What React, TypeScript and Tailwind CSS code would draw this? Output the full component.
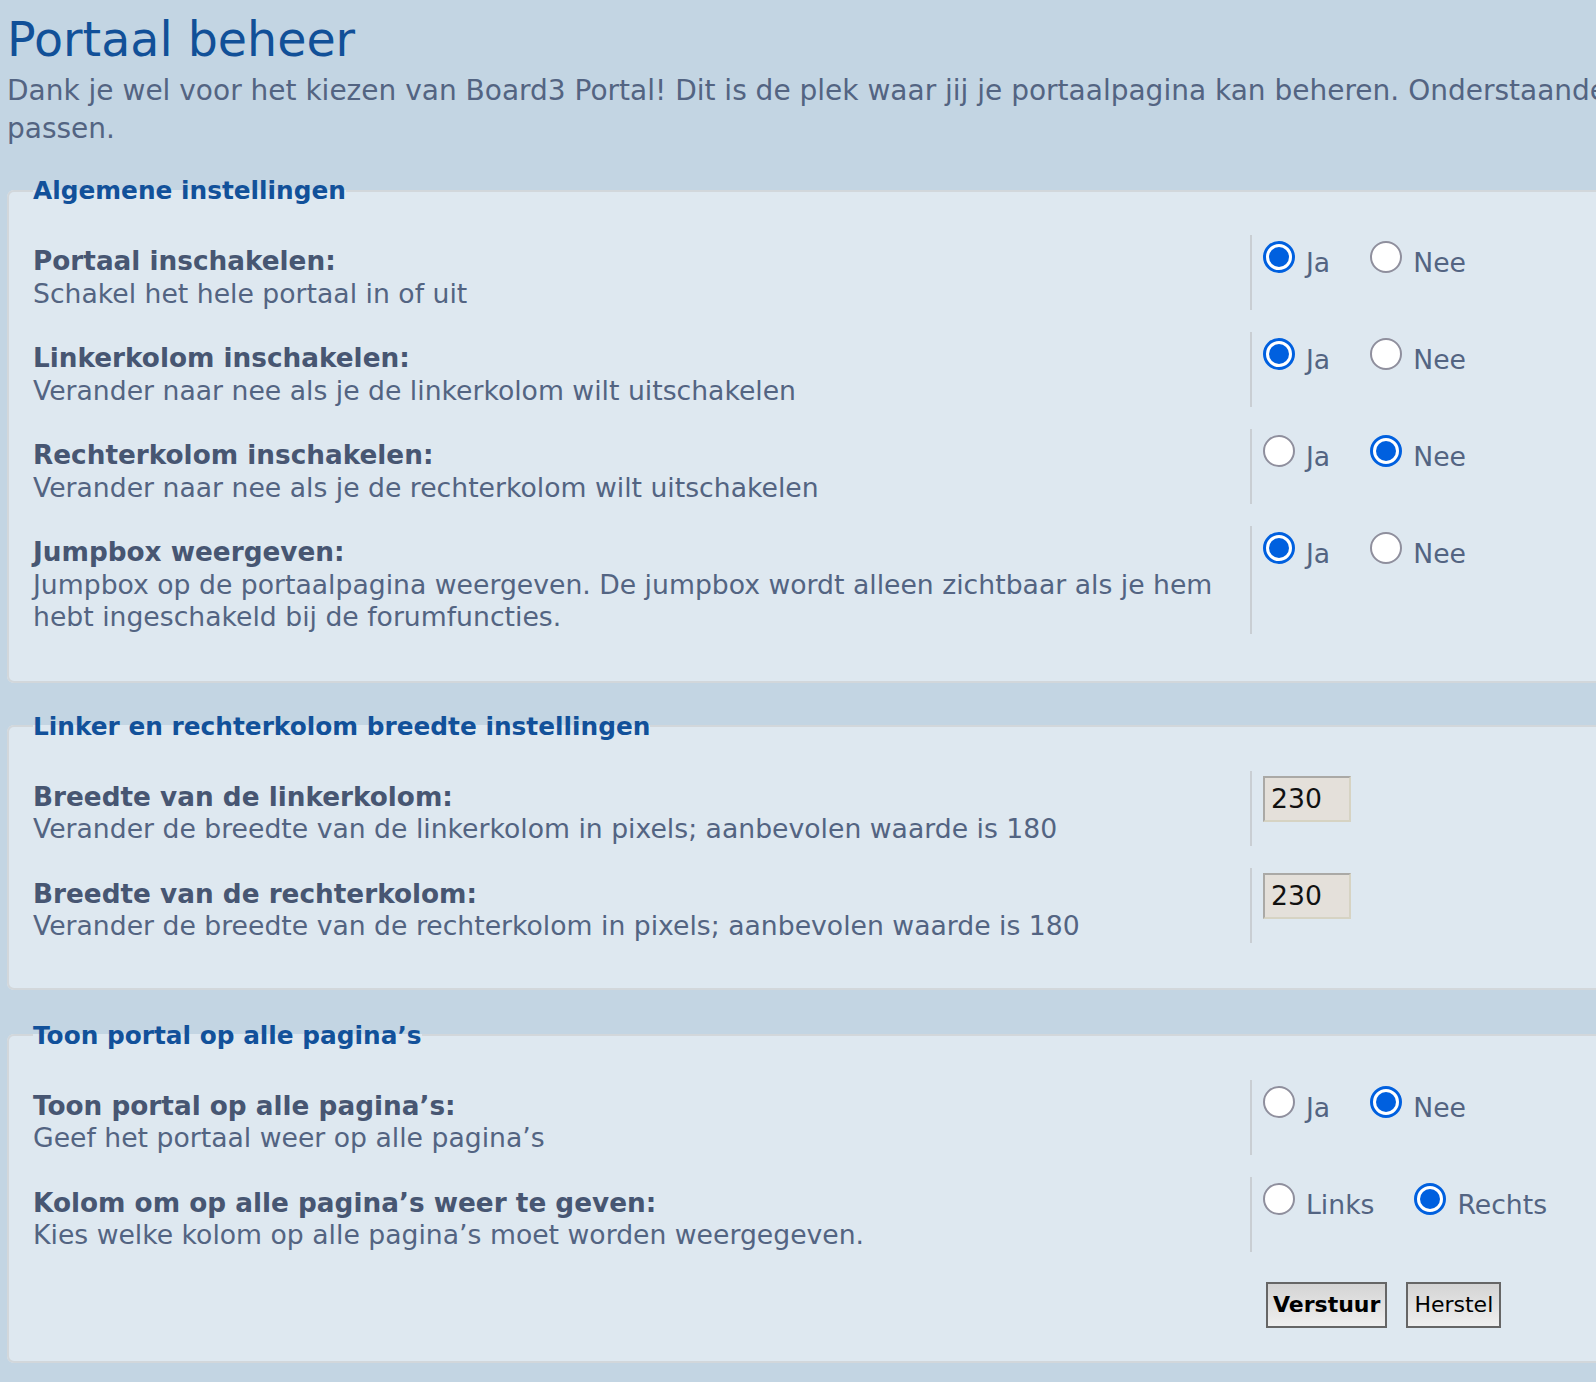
type Opt = { label: string; checked?: boolean };

function Radio({ checked }: { checked?: boolean }) {
  if (checked) {
    return (
      <span className="flex h-8 w-8 shrink-0 items-center justify-center rounded-full border-[3px] border-[#0060df] bg-white">
        <span className="h-5 w-5 rounded-full bg-[#0060df]"></span>
      </span>
    );
  }
  return <span className="h-8 w-8 shrink-0 rounded-full border-2 border-[#8f8f9d] bg-white"></span>;
}

function Radios({ options }: { options: Opt[] }) {
  return (
    <div className="flex gap-[40px] pt-[6px]">
      {options.map((o) => (
        <label key={o.label} className="flex items-start gap-[11px]">
          <Radio checked={o.checked} />
          <span className="mt-[6px] text-[26.67px] leading-[32.5px] text-[#536482]">{o.label}</span>
        </label>
      ))}
    </div>
  );
}

function NumberBox({ value }: { value: string }) {
  return (
    <div className="mt-[5px] h-[46px] w-[88px] border-2 border-t-[#aaa9a6] border-l-[#aaa9a6] border-b-[#d6d3c3] border-r-[#d6d3c3] bg-[#e4e0da] pl-[6px] text-[26.67px] leading-[42px] text-[#111]">
      {value}
    </div>
  );
}

function Row({ title, desc, children }: { title: string; desc: string; children: React.ReactNode }) {
  return (
    <div className="flex">
      <div className="w-[1217px] shrink-0 pr-[10px] pt-[10px] text-[26.67px] leading-[32.5px]">
        <div className="text-[26.3px] font-bold text-[#475672]">{title}</div>
        <div className="text-[#536482]">{desc}</div>
      </div>
      <div className="border-l-2 border-[#c9ced3] pl-[11px]">{children}</div>
    </div>
  );
}

function Panel({ legend, children, className = "" }: { legend: string; children: React.ReactNode; className?: string }) {
  return (
    <fieldset className={`w-[1720px] rounded-[7px] border-2 border-[#d2d7db] bg-[#dee8f0] px-[24px] pt-[30px] ${className}`}>
      <legend className="text-[24.8px] leading-[29px] font-bold text-[#12519a]">{legend}</legend>
      <div className="flex flex-col gap-[22px]">{children}</div>
    </fieldset>
  );
}

export default function App() {
  return (
    <div className="min-h-screen overflow-hidden bg-[#c3d5e3] font-['DejaVu_Sans',sans-serif]">
      <div className="w-[1760px] pl-[7px]">
        <h1 className="pt-[11px] text-[47.5px] leading-[58px] font-normal text-[#115098]">Portaal beheer</h1>
        <p className="mt-[3px] text-[28px] leading-[38px] text-[#536482]">
          <span className="whitespace-nowrap">
            Dank je wel voor het kiezen van Board3 Portal! Dit is de plek waar jij je portaalpagina kan beheren. Onderstaande opties laten je de verschillende instellingen aan te
          </span>
          <br />
          passen.
        </p>

        <Panel legend="Algemene instellingen" className="mt-[28px] pb-[47px]">
          <Row title="Portaal inschakelen:" desc="Schakel het hele portaal in of uit">
            <Radios options={[{ label: "Ja", checked: true }, { label: "Nee" }]} />
          </Row>
          <Row title="Linkerkolom inschakelen:" desc="Verander naar nee als je de linkerkolom wilt uitschakelen">
            <Radios options={[{ label: "Ja", checked: true }, { label: "Nee" }]} />
          </Row>
          <Row title="Rechterkolom inschakelen:" desc="Verander naar nee als je de rechterkolom wilt uitschakelen">
            <Radios options={[{ label: "Ja" }, { label: "Nee", checked: true }]} />
          </Row>
          <Row
            title="Jumpbox weergeven:"
            desc="Jumpbox op de portaalpagina weergeven. De jumpbox wordt alleen zichtbaar als je hem hebt ingeschakeld bij de forumfuncties."
          >
            <Radios options={[{ label: "Ja", checked: true }, { label: "Nee" }]} />
          </Row>
        </Panel>

        <Panel legend="Linker en rechterkolom breedte instellingen" className="mt-[29px] pb-[45px]">
          <Row title="Breedte van de linkerkolom:" desc="Verander de breedte van de linkerkolom in pixels; aanbevolen waarde is 180">
            <NumberBox value="230" />
          </Row>
          <Row title="Breedte van de rechterkolom:" desc="Verander de breedte van de rechterkolom in pixels; aanbevolen waarde is 180">
            <NumberBox value="230" />
          </Row>
        </Panel>

        <Panel legend="Toon portal op alle pagina’s" className="mt-[31px] pb-[33px]">
          <Row title="Toon portal op alle pagina’s:" desc="Geef het portaal weer op alle pagina’s">
            <Radios options={[{ label: "Ja" }, { label: "Nee", checked: true }]} />
          </Row>
          <Row title="Kolom om op alle pagina’s weer te geven:" desc="Kies welke kolom op alle pagina’s moet worden weergegeven.">
            <Radios options={[{ label: "Links" }, { label: "Rechts", checked: true }]} />
          </Row>
          <div className="mt-[8px] flex gap-[19px] pl-[1233px]">
            <button className="h-[46px] border-2 border-[#666] bg-gradient-to-b from-[#d4d4d4] to-[#efefef] px-[5px] text-[22px] font-bold text-black">
              Verstuur
            </button>
            <button className="h-[46px] border-2 border-[#666] bg-gradient-to-b from-[#d4d4d4] to-[#efefef] px-[6px] text-[22px] text-black">
              Herstel
            </button>
          </div>
        </Panel>
      </div>
    </div>
  );
}
